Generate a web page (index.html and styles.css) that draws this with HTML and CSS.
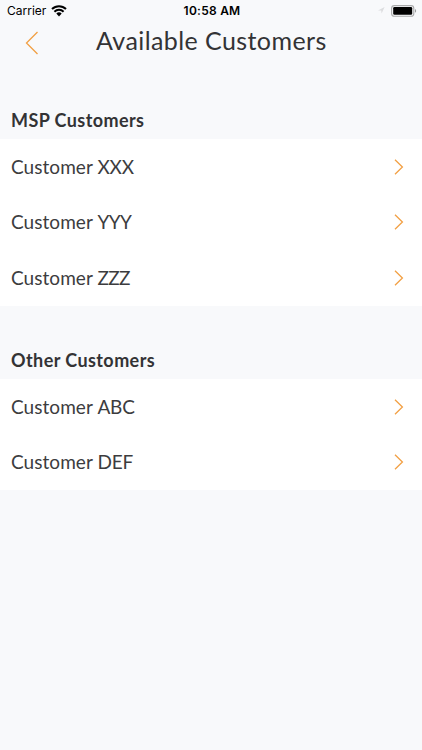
FILE: index.html
```html
<!DOCTYPE html>
<html lang="en">
<head>
  <meta charset="UTF-8">
  <title>Available Customers</title>
  <link rel="stylesheet" href="styles.css">
</head>
<body>

  <div class="status-bar">
    <div class="status-left">
      <span>Carrier</span>
      <svg class="wifi" width="16" height="12" viewBox="0 0 16 12">
        <path d="M1 4a10 10 0 0 1 14 0M3.4 6.7a6.6 6.6 0 0 1 9.2 0" fill="none" stroke="#000" stroke-width="2"/>
        <path d="M5.3 8.6a4 4 0 0 1 5.4 0L8 11.4z"/>
      </svg>
    </div>
    <div class="status-time">10:58 AM</div>
    <div class="status-right">
      <svg width="7" height="7" viewBox="0 0 7 7"><path d="M0 3.4L6.6 0 3.6 6.6 3.2 3.6z" fill="#dcdddf"/></svg>
      <svg width="26" height="12" viewBox="0 0 26 12">
        <rect x=".6" y=".6" width="22.2" height="10.6" rx="2.8" fill="none" stroke="#a9aaab" stroke-width="1.1"/>
        <rect x="2.2" y="2" width="19" height="7.8" rx="1.3"/>
        <path d="M24.1 4v3.8c1.4-.6 1.4-3.2 0-3.8z" fill="#8e8f90"/>
      </svg>
    </div>
  </div>

  <header class="nav-bar">
    <svg class="back" width="14" height="24" viewBox="0 0 14 24"><path d="M12.5 1L1.5 12l11 11"/></svg>
    <h1>Available Customers</h1>
  </header>

  <section>
    <h2>MSP Customers</h2>
    <ul>
      <li><div>Customer <span>XXX</span></div><svg width="10" height="16" viewBox="0 0 10 16"><path d="M1 .8L8.4 8 1 15.2"/></svg></li>
      <li><div>Customer <span class="tight">YYY</span></div><svg width="10" height="16" viewBox="0 0 10 16"><path d="M1 .8L8.4 8 1 15.2"/></svg></li>
      <li><div>Customer <span class="tight">ZZZ</span></div><svg width="10" height="16" viewBox="0 0 10 16"><path d="M1 .8L8.4 8 1 15.2"/></svg></li>
    </ul>
  </section>

  <section>
    <h2>Other Customers</h2>
    <ul>
      <li><div>Customer <span>ABC</span></div><svg width="10" height="16" viewBox="0 0 10 16"><path d="M1 .8L8.4 8 1 15.2"/></svg></li>
      <li><div>Customer <span>DEF</span></div><svg width="10" height="16" viewBox="0 0 10 16"><path d="M1 .8L8.4 8 1 15.2"/></svg></li>
    </ul>
  </section>

</body>
</html>
```

FILE: styles.css
```css
* {
  box-sizing: border-box;
}

body {
  margin: 0;
  min-height: 750px;
  background-color: #f8f9fb;
  color: #333335;
  font-family: Lato, sans-serif;
}

svg {
  display: block;
  flex: none;
}

.status-bar {
  display: grid;
  grid-template-columns: 1fr auto 1fr;
  align-items: center;
  height: 21px;
  padding: 0 5px 0 7px;
  color: #000;
  font-family: Inter, sans-serif;
  font-size: 12px;
}

.status-left,
.status-right {
  display: flex;
  align-items: center;
  gap: 5px;
}

.status-right {
  justify-content: flex-end;
  gap: 6px;
}

.status-time {
  font-weight: 600;
  letter-spacing: 0.25px;
}

.nav-bar {
  display: flex;
  align-items: center;
  height: 43px;
  padding-left: 25px;
}

.back path,
li path {
  fill: none;
  stroke: #f2a044;
  stroke-width: 1.3;
}

h1 {
  margin: 0 0 6px 57px;
  font-size: 25px;
  font-weight: 400;
  letter-spacing: 0.42px;
}

section {
  height: 240px;
}

h2 {
  display: flex;
  align-items: flex-end;
  height: 75px;
  margin: 0;
  padding: 0 11px 7px;
  font-size: 18px;
  font-weight: 700;
  line-height: 24px;
  letter-spacing: 0.42px;
}

ul {
  margin: 0;
  padding: 0;
  background-color: #fff;
  list-style: none;
}

li {
  display: flex;
  align-items: center;
  justify-content: space-between;
  height: 55.6px;
  padding: 0 18px 0 11px;
  color: #3c3c3e;
  font-size: 19px;
  letter-spacing: 0.05px;
}

li div {
  padding-bottom: 1.5px;
}

li span {
  letter-spacing: -0.2px;
}

li .tight {
  letter-spacing: -0.6px;
}
```
